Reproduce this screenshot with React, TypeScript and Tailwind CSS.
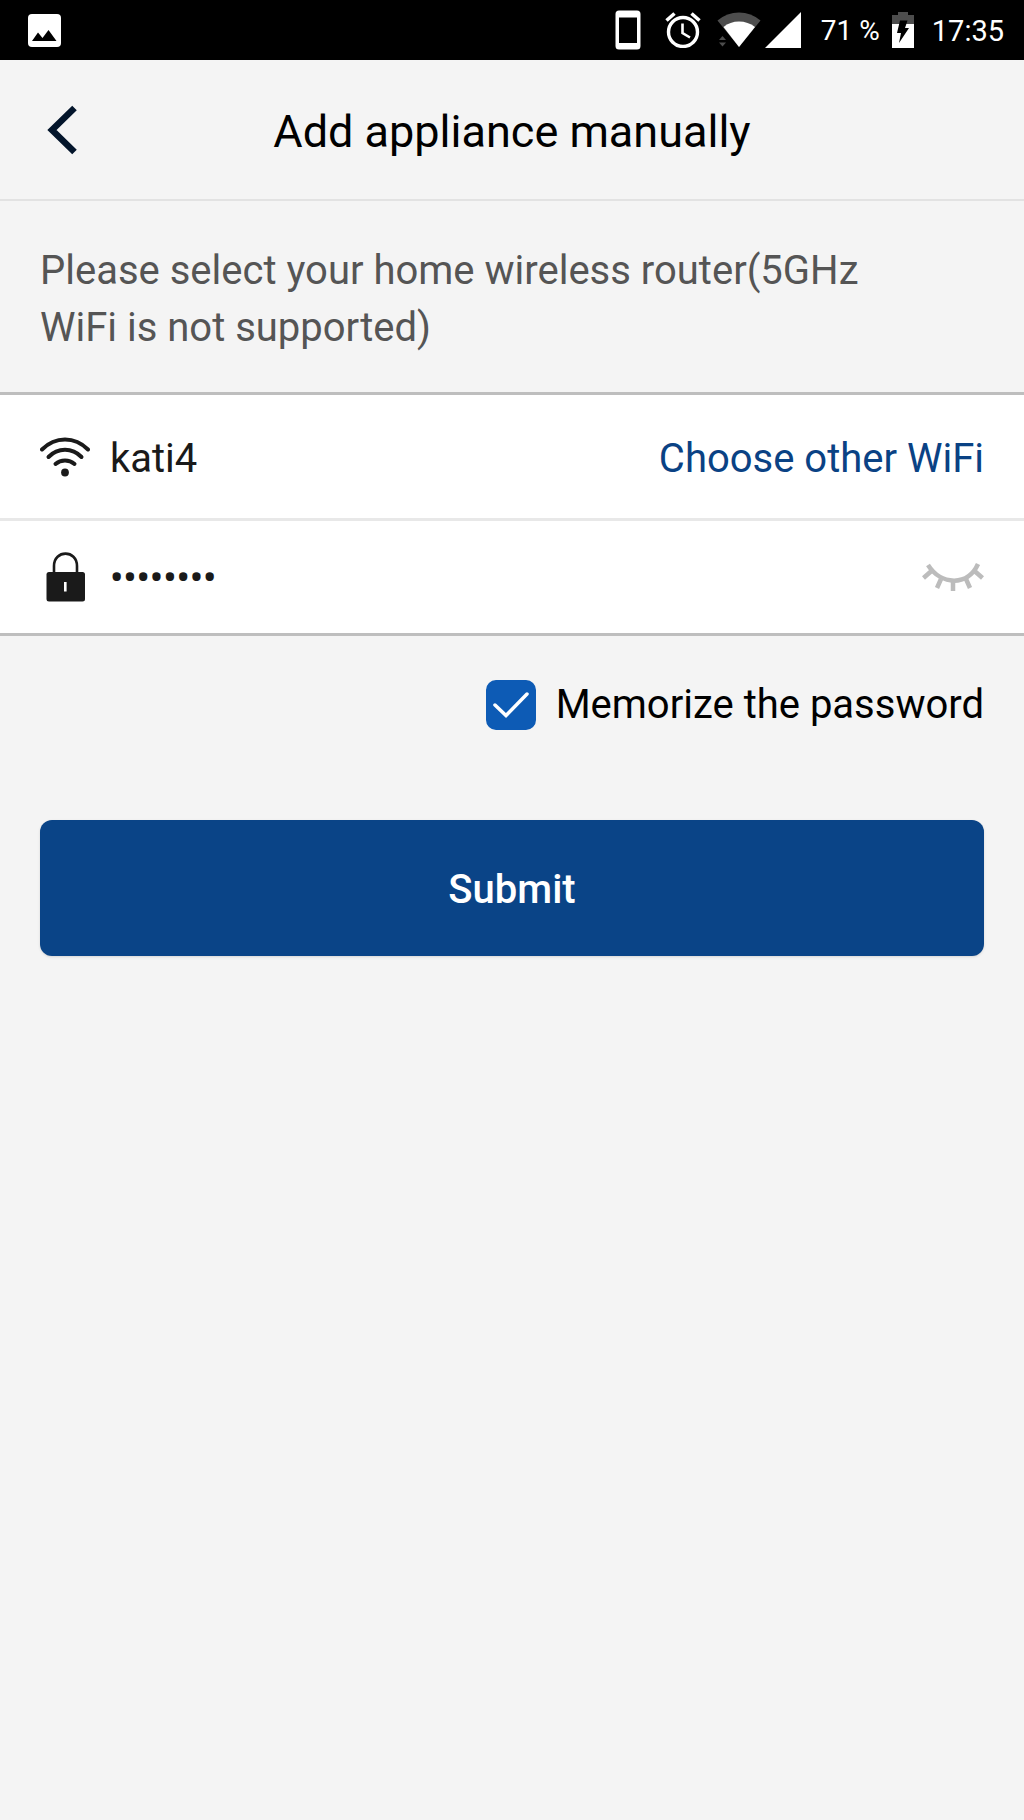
import { useState } from "react";

function StatusBar() {
  return (
    <div className="flex h-[60px] items-center justify-between bg-black pl-7 pr-5 text-white">
      <svg width="33" height="33" viewBox="0 0 33 33" aria-label="Screenshot saved">
        <rect width="33" height="33" rx="4" fill="#fff" />
        <path d="M4 27 L10 18.500 L14.500 24 L20.500 16 L28.500 27 Z" fill="#000" />
      </svg>
      <div className="flex items-center">
        <svg width="26" height="40" viewBox="0 0 26 40" aria-label="Phone">
          <path
            d="M4 0.500 H22 Q25.500 0.500 25.500 4 V36 Q25.500 39.500 22 39.500 H4 Q0.500 39.500 0.500 36 V4 Q0.500 0.500 4 0.500 Z M4 7.500 V33 H22 V7.500 Z"
            fill="#fff"
            fillRule="evenodd"
          />
        </svg>
        <svg className="ml-6" width="36" height="36" viewBox="0 0 36 36" fill="none" stroke="#fff" aria-label="Alarm">
          <circle cx="18" cy="20" r="14.500" strokeWidth="3.400" />
          <path d="M1.500 8.500 L9.500 1.500 M34.500 8.500 L26.500 1.500" strokeWidth="3.600" />
          <path d="M17.500 11.500 V21 L25 25.500" strokeWidth="2.600" />
        </svg>
        <svg className="ml-4" width="44" height="36" viewBox="0 0 44 36" aria-label="Wi-Fi signal">
          <path d="M0.500 8.500 Q10 0.500 22 0.500 Q34 0.500 43.500 8.500 L22 35 Z" fill="#4d4d4d" />
          <path d="M6.500 15 Q13 9.500 22 9.500 Q31 9.500 38 15 L22 35 Z" fill="#fff" />
          <path d="M2 28 L5.500 24 L9 28 Z M2 30.500 L5.500 34.500 L9 30.500 Z" fill="#4d4d4d" />
        </svg>
        <svg className="ml-1" width="36" height="36" viewBox="0 0 36 36" aria-label="Cell signal">
          <path d="M36 0 V36 H0 Z" fill="#fff" />
        </svg>
        <span className="ml-5 pt-0.5 text-[28px] leading-8">71 %</span>
        <svg className="ml-3" width="22" height="36" viewBox="0 0 22 36" aria-label="Battery charging">
          <path d="M6 0 H16 V3 H22 V12 H0 V3 H6 Z" fill="#4d4d4d" />
          <path d="M0 12 H22 V36 H0 Z" fill="#fff" />
          <path d="M8 8.500 H15.500 L13 16 H17 L7 31 L9 21 H5 Z" fill="#000" />
        </svg>
        <span className="ml-[18px] pt-0.5 text-[29px] leading-8">17:35</span>
      </div>
    </div>
  );
}

function WifiIcon() {
  return (
    <svg width="50" height="40" viewBox="0 0 50 40" fill="none" stroke="#1a1a1a" strokeWidth="4" strokeLinecap="round" aria-hidden="true">
      <path d="M2 12.500 Q12 2.500 25 2.500 Q38 2.500 48 12.500" />
      <path d="M8.500 20 Q15.500 12.800 25 12.800 Q34.500 12.800 41.500 20" />
      <path d="M15.500 27 Q19.500 23.500 25 23.500 Q30.500 23.500 34.500 27" />
      <circle cx="25" cy="35.500" r="3.900" fill="#1a1a1a" stroke="none" />
    </svg>
  );
}

function LockIcon() {
  return (
    <svg width="50" height="50" viewBox="0 0 50 50" aria-hidden="true">
      <path d="M14 22 V14 C14 -2.500 37 -2.500 37 14 V22" fill="none" stroke="#1a1a1a" strokeWidth="2.600" />
      <rect x="6.500" y="20" width="38.500" height="29.500" rx="2.500" fill="#1a1a1a" />
      <rect x="24" y="30" width="2.600" height="9.500" fill="#fff" />
    </svg>
  );
}

function ClosedEyeIcon() {
  return (
    <svg width="62" height="28" viewBox="0 0 62 28" fill="none" stroke="#bcbcbc" strokeWidth="4.500" aria-hidden="true">
      <path d="M6 2 C19 22.500 46 23.500 56 1" />
      <path d="M10 7.500 L1.500 15 M52 7.500 L60.500 15 M19 16 L15 25 M31 17 V28 M44 16 L48 25" />
    </svg>
  );
}

export default function App() {
  const [password, setPassword] = useState("password");
  const [visible, setVisible] = useState(false);
  const [memorize, setMemorize] = useState(true);

  return (
    <div className="min-h-screen bg-[#f4f4f4] font-['Roboto',sans-serif] text-[40px] leading-[57px] text-black">
      <StatusBar />
      <header className="grid h-[141px] grid-cols-[120px_1fr_120px] items-center border-b-2 border-[#e2e2e2]">
        <button type="button" aria-label="Back" className="flex h-20 items-center pl-[46px]">
          <svg width="31" height="50" viewBox="0 0 31 50" fill="none" stroke="#03152b" strokeWidth="6.500" aria-hidden="true">
            <path d="M28.500 3 L6 25 L28.500 47" />
          </svg>
        </button>
        <h1 className="pt-1 text-center text-[45px]">Add appliance manually</h1>
      </header>

      <main>
        <p className="pb-9 pl-10 pr-24 pt-[41px] text-[#555555]">
          Please select your home wireless router(5GHz WiFi is not supported)
        </p>

        <form onSubmit={(e) => e.preventDefault()}>
          <div className="border-y-[3px] border-[#bebebe] bg-white text-[#1a1a1a]">
            <div className="flex h-[126px] items-center border-b-[3px] border-[#e8e8e8] px-10">
              <WifiIcon />
              <span className="ml-5 flex-1 pt-1">kati4</span>
              <a href="#networks" className="pt-1 text-[#0a4284]">
                Choose other WiFi
              </a>
            </div>
            <div className="flex h-[112px] items-center px-10">
              <LockIcon />
              <input
                type={visible ? "text" : "password"}
                aria-label="WiFi password"
                value={password}
                onChange={(e) => setPassword(e.target.value)}
                className="ml-5 min-w-0 flex-1 bg-transparent pt-0.5 text-[38px] font-medium outline-none"
              />
              <button type="button" aria-label="Show password" onClick={() => setVisible(!visible)}>
                <ClosedEyeIcon />
              </button>
            </div>
          </div>

          <div className="px-10 pt-10">
            <label className="flex items-center justify-end gap-5">
              <span className="grid size-[50px] place-items-center">
                <input
                  type="checkbox"
                  checked={memorize}
                  onChange={(e) => setMemorize(e.target.checked)}
                  className="peer col-start-1 row-start-1 size-[50px] appearance-none rounded-[10px] border-2 border-[#0d5bb5] bg-white checked:bg-[#0d5bb5]"
                />
                <svg
                  className="pointer-events-none invisible col-start-1 row-start-1 peer-checked:visible"
                  width="36"
                  height="26"
                  viewBox="0 0 36 26"
                  fill="none"
                  stroke="#fff"
                  strokeWidth="3.500"
                  strokeLinecap="round"
                  aria-hidden="true"
                >
                  <path d="M2 13 L13 23.500 L34 2" />
                </svg>
              </span>
              <span>Memorize the password</span>
            </label>

            <button
              type="submit"
              className="mt-[87px] h-[136px] w-full rounded-xl bg-[#0a4487] pt-0.5 font-medium text-white shadow-sm"
            >
              Submit
            </button>
          </div>
        </form>
      </main>
    </div>
  );
}
